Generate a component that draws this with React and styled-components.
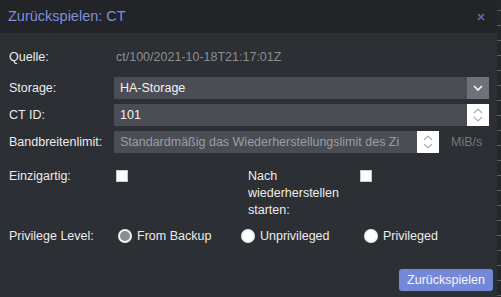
import styled, { createGlobalStyle } from "styled-components";

const Global = createGlobalStyle`
    html, body {
        margin: 0;
        padding: 0;
        background: #25272b;
        font-family: "Liberation Sans", Arial, sans-serif;
    }
`;

const Page = styled.div`
    display: flex;
    width: 501px;
    height: 297px;
    overflow: hidden;
`;

const Dialog = styled.div`
    width: 497px;
    display: flex;
    flex-direction: column;
    background: #2c2f34;
`;

const Backdrop = styled.div`
    flex: 1;
    background: repeating-linear-gradient(
        to bottom,
        #25272b 0px,
        #25272b 10px,
        #5a5d62 10px,
        #5a5d62 11px,
        #25272b 11px,
        #25272b 15px
    );
`;

const Header = styled.div`
    height: 33px;
    background: #222428;
    display: flex;
    align-items: center;
    justify-content: space-between;
    padding: 0 12px 0 8px;
`;

const Title = styled.div`
    color: #7f8fdf;
    font-size: 14.5px;
    margin-top: -1px;
`;

const Close = styled.button`
    border: 0;
    background: none;
    padding: 0;
    display: flex;
    cursor: pointer;
`;

const Body = styled.div`
    flex: 1;
    display: flex;
    flex-direction: column;
    padding: 13px 8px 0 9px;
`;

const Row = styled.div`
    display: flex;
    align-items: center;
    height: 22px;
    margin-top: ${(p) => p.gap || 0}px;
`;

const Label = styled.div`
    width: ${(p) => p.width || 105}px;
    flex-shrink: 0;
    color: #ececec;
    font-size: 12.5px;
    line-height: 17px;
    white-space: nowrap;
`;

const Value = styled.div`
    color: #8b8e92;
    font-size: 12.5px;
    padding-left: 2px;
`;

const Field = styled.div`
    flex: ${(p) => (p.fixed ? "none" : 1)};
    width: ${(p) => (p.fixed ? `${p.fixed}px` : "auto")};
    height: 22px;
    display: flex;
    background: #4a4d54;
`;

const FieldText = styled.div`
    flex: 1;
    padding: 0 6px;
    display: flex;
    align-items: center;
    font-size: 12.5px;
    color: ${(p) => (p.placeholder ? "#9c9ea2" : "#f2f2f2")};
    white-space: nowrap;
    overflow: hidden;
`;

const Trigger = styled.div`
    width: 22px;
    height: 22px;
    display: flex;
    align-items: center;
    justify-content: center;
    background: ${(p) => (p.light ? "#ffffff" : "#6f7278")};
`;

const Unit = styled.div`
    color: #76797e;
    font-size: 12.5px;
    margin-left: 12px;
`;

const CheckRow = styled.div`
    display: flex;
    margin-top: 15px;
`;

const CheckGroup = styled.div`
    display: flex;
    align-items: flex-start;
    width: ${(p) => p.width}px;
`;

const Box = styled.div`
    width: 12px;
    height: 12px;
    margin: 2px 0 0 2px;
    background: #ffffff;
    border: 1px solid #c8c8c8;
    box-sizing: border-box;
`;

const Radios = styled.div`
    display: grid;
    grid-template-columns: repeat(3, 123px);
    padding-left: 4px;
`;

const Radio = styled.label`
    display: flex;
    align-items: center;
    gap: 5px;
    color: #ececec;
    font-size: 12.5px;
    white-space: nowrap;
`;

const Dot = styled.span`
    width: 14px;
    height: 14px;
    border-radius: 50%;
    box-sizing: border-box;
    background: ${(p) => (p.checked ? "#8c8c8c" : "#ffffff")};
    border: 2px solid #f2f2f2;
`;

const Footer = styled.div`
    display: flex;
    justify-content: flex-end;
    padding-top: 22px;
    margin-right: -4px;
`;

const Button = styled.button`
    width: 94px;
    height: 22px;
    border: 0;
    border-radius: 3px;
    background: #7488d8;
    color: #f4f5fb;
    font-family: inherit;
    font-size: 12.5px;
    padding: 0;
`;

const ChevronDown = ({ color = "#ffffff" }) => (
    <svg width="10" height="6" viewBox="0 0 10 6">
        <path d="M1 1 L5 5 L9 1" fill="none" stroke={color} strokeWidth="1.6" />
    </svg>
);

const Spinner = () => (
    <svg width="12" height="16" viewBox="0 0 12 16">
        <path d="M2 6 L6 2 L10 6" fill="none" stroke="#a9abaf" strokeWidth="1.1" />
        <path d="M2 10 L6 14 L10 10" fill="none" stroke="#a9abaf" strokeWidth="1.1" />
    </svg>
);

const App = () => {
    return (
        <Page>
            <Global />
            <Dialog>
                <Header>
                    <Title>Zurückspielen: CT</Title>
                    <Close>
                        <svg width="8" height="8" viewBox="0 0 8 8">
                            <path d="M1 1 L7 7 M7 1 L1 7" stroke="#5f6eaa" strokeWidth="1.6" />
                        </svg>
                    </Close>
                </Header>
                <Body>
                    <Row>
                        <Label>Quelle:</Label>
                        <Value>ct/100/2021-10-18T21:17:01Z</Value>
                    </Row>
                    <Row gap={9}>
                        <Label>Storage:</Label>
                        <Field>
                            <FieldText>HA-Storage</FieldText>
                            <Trigger>
                                <ChevronDown />
                            </Trigger>
                        </Field>
                    </Row>
                    <Row gap={5}>
                        <Label>CT ID:</Label>
                        <Field>
                            <FieldText>101</FieldText>
                            <Trigger light>
                                <Spinner />
                            </Trigger>
                        </Field>
                    </Row>
                    <Row gap={5}>
                        <Label>Bandbreitenlimit:</Label>
                        <Field fixed={325}>
                            <FieldText placeholder>
                                Standardmäßig das Wiederherstellungslimit des Zi
                            </FieldText>
                            <Trigger light>
                                <Spinner />
                            </Trigger>
                        </Field>
                        <Unit>MiB/s</Unit>
                    </Row>
                    <CheckRow>
                        <CheckGroup width={239}>
                            <Label>Einzigartig:</Label>
                            <Box />
                        </CheckGroup>
                        <CheckGroup>
                            <Label width={110}>
                                Nach
                                <br />
                                wiederherstellen
                                <br />
                                starten:
                            </Label>
                            <Box />
                        </CheckGroup>
                    </CheckRow>
                    <Row gap={6}>
                        <Label>Privilege Level:</Label>
                        <Radios>
                            <Radio>
                                <Dot checked />
                                From Backup
                            </Radio>
                            <Radio>
                                <Dot />
                                Unprivileged
                            </Radio>
                            <Radio>
                                <Dot />
                                Privileged
                            </Radio>
                        </Radios>
                    </Row>
                    <Footer>
                        <Button>Zurückspielen</Button>
                    </Footer>
                </Body>
            </Dialog>
            <Backdrop />
        </Page>
    );
};

export default App;
